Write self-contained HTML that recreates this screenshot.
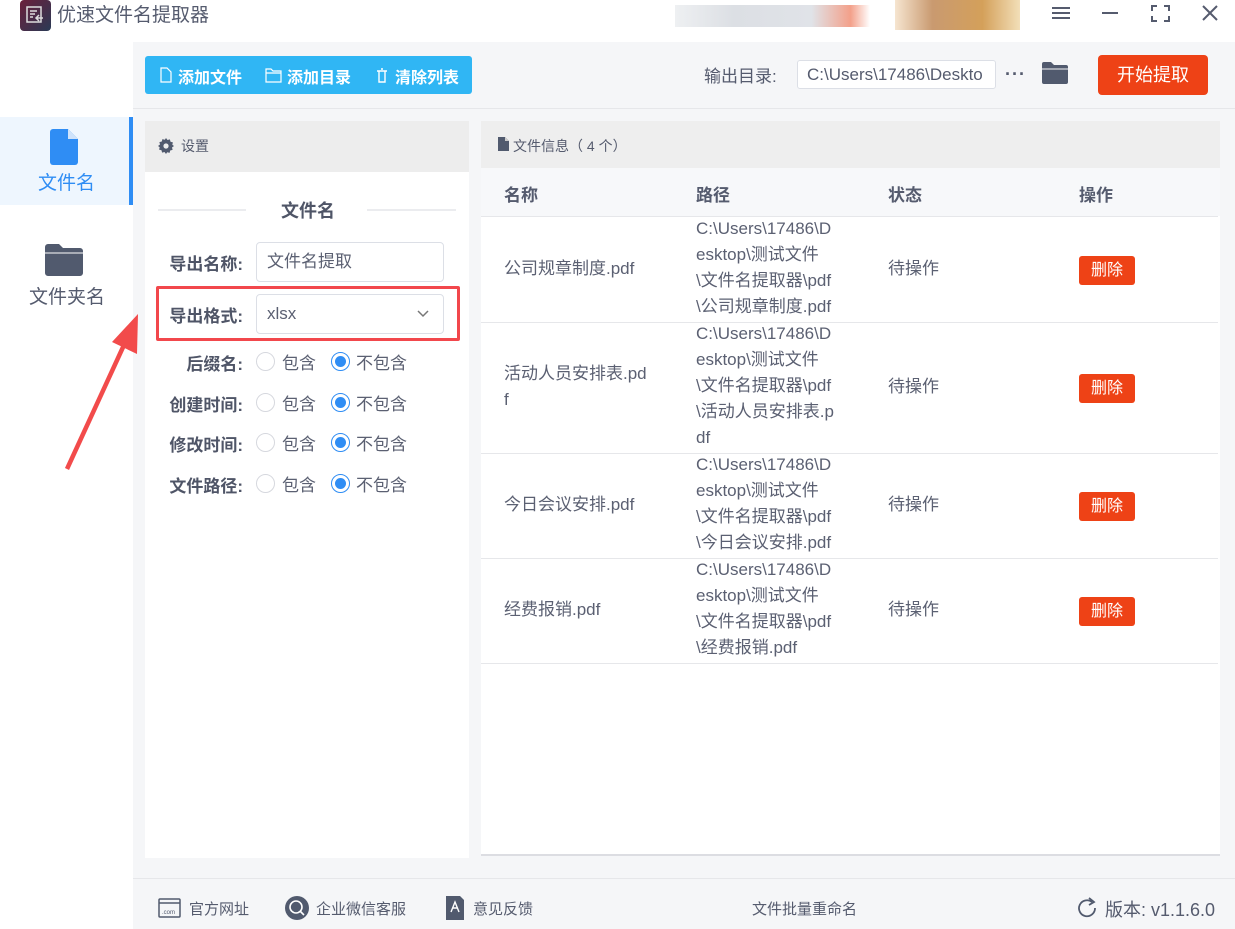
<!DOCTYPE html>
<html><head><meta charset="utf-8"><style>
*{margin:0;padding:0;box-sizing:border-box}
body{width:1235px;height:929px;position:relative;background:#fff;font-family:"Liberation Sans","Noto Sans CJK SC",sans-serif;color:#555b6e;overflow:hidden}
.a{position:absolute}
.lbl{font-size:17px;font-weight:bold;color:#4f5567;text-align:right;width:90px;left:153px}
.radio{width:19px;height:19px;border:1px solid #d6d8de;border-radius:50%;background:#fff}
.radio.on{border-color:#2f8df4}
.radio.on::after{content:"";position:absolute;left:3px;top:3px;width:11px;height:11px;border-radius:50%;background:#2f8df4}
.rt{font-size:17px;color:#5b6072}
.cell{font-size:17px;color:#5b6072;line-height:26px;white-space:nowrap}
.del{background:#ee4216;color:#fff;font-size:16px;width:56px;height:29px;line-height:29px;text-align:center;border-radius:3px}
.hline{height:1px;background:#e6e7ea}
</style></head><body>
<div class="a" style="left:20px;top:0;width:31px;height:31px;border-radius:4px;background:linear-gradient(135deg,#6b1f3a,#2a3a55)"></div>
<svg class="a" style="left:24px;top:4px" width="22" height="22" viewBox="0 0 22 22"><rect x="3" y="3" width="14" height="15" fill="none" stroke="#ddd" stroke-width="1.5"/><path d="M6 7h7M6 10h5M6 13h3M19 14h-7M15 11l-3 3 3 3" stroke="#ddd" stroke-width="1.5" fill="none"/></svg>
<div class="a" style="left:57px;top:0px;font-size:19px;color:#555b6e">优速文件名提取器</div>
<div class="a" style="left:675px;top:5px;width:195px;height:22px;background:linear-gradient(90deg,#eef0f2,#dcdfe4 30%,#e0e3e8 70%,#f3a08a 90%,#fff)"></div>
<div class="a" style="left:895px;top:0px;width:125px;height:30px;background:linear-gradient(90deg,#f6e5d0,#c99a70 30%,#d4a05a 70%,#f2dfb8)"></div>
<svg class="a" style="left:1050px;top:3px" width="175" height="20"><path d="M2 5h18M2 10h18M2 15h18" stroke="#555b6e" stroke-width="2"/><path d="M52 10h16" stroke="#555b6e" stroke-width="2"/><path d="M102 8V3h5M114 3h5v5M119 13v5h-5M107 18h-5v-5" stroke="#555b6e" stroke-width="2" fill="none"/><path d="M153 3l14 14M167 3l-14 14" stroke="#555b6e" stroke-width="2"/></svg>
<div class="a" style="left:0;top:117px;width:133px;height:88px;background:#eef6fe"></div>
<div class="a" style="left:129px;top:117px;width:4px;height:88px;background:#2f8df4"></div>
<svg class="a" style="left:50px;top:129px" width="28" height="36" viewBox="0 0 28 36"><path d="M3 0h15l10 10v23a3 3 0 0 1-3 3H3a3 3 0 0 1-3-3V3a3 3 0 0 1 3-3z" fill="#2f8df4"/><path d="M18 0v10h10z" fill="#cfe3fb"/></svg>
<div class="a" style="left:38px;top:168px;font-size:19px;color:#2f8df4">文件名</div>
<svg class="a" style="left:45px;top:244px" width="38" height="32"><path d="M0 3a3 3 0 0 1 3-3h11l4 4h17a3 3 0 0 1 3 3v22a3 3 0 0 1-3 3H3a3 3 0 0 1-3-3z" fill="#515a6e"/><path d="M0 9h38" stroke="#fff" stroke-width="1"/></svg>
<div class="a" style="left:29px;top:282px;font-size:19px;color:#555b6e">文件夹名</div>
<div class="a" style="left:133px;top:42px;width:1102px;height:887px;background:#f5f6f8"></div>
<div class="a hline" style="left:133px;top:108px;width:1102px"></div>
<div class="a" style="left:145px;top:56px;width:327px;height:38px;background:#30b6f4;border-radius:3px"></div>
<svg class="a" style="left:160px;top:67px" width="300" height="16"><path d="M1 1h6l4 4v10H1z" fill="none" stroke="#fff" stroke-width="1.2"/><path d="M106 2h5l2 2h8v11h-15z M106 6h15" fill="none" stroke="#fff" stroke-width="1.2"/><path d="M217 4h10M219 4v11h6V4M221 2h2" fill="none" stroke="#fff" stroke-width="1.4"/></svg>
<div class="a" style="left:178px;top:64px;font-size:16px;font-weight:bold;color:#fff">添加文件</div>
<div class="a" style="left:287px;top:64px;font-size:16px;font-weight:bold;color:#fff">添加目录</div>
<div class="a" style="left:395px;top:64px;font-size:16px;font-weight:bold;color:#fff">清除列表</div>
<div class="a" style="left:704px;top:62px;font-size:17px;color:#555b6e">输出目录:</div>
<div class="a" style="left:797px;top:60px;width:199px;height:29px;background:#fff;border:1px solid #dcdfe6;border-radius:3px;font-size:17px;line-height:27px;padding-left:9px;color:#555b6e;overflow:hidden;white-space:nowrap">C:\Users\17486\Deskto</div>
<div class="a" style="left:1005px;top:64px;font-size:18px;font-weight:bold;color:#555b6e;letter-spacing:1px">···</div>
<svg class="a" style="left:1042px;top:62px" width="26" height="22"><path d="M0 2a2 2 0 0 1 2-2h7l3 3h12a2 2 0 0 1 2 2v15a2 2 0 0 1-2 2H2a2 2 0 0 1-2-2z" fill="#515a6e"/><path d="M0 7h26" stroke="#f5f6f8" stroke-width="1"/></svg>
<div class="a" style="left:1098px;top:55px;width:110px;height:40px;background:#ee4216;border-radius:4px;color:#fff;font-size:18px;line-height:40px;text-align:center">开始提取</div>
<div class="a" style="left:145px;top:121px;width:324px;height:737px;background:#fff"></div>
<div class="a" style="left:145px;top:121px;width:324px;height:51px;background:#ededed"></div>
<svg class="a" style="left:158px;top:138px" width="16" height="16" viewBox="0 0 16 16"><path d="M8 0l1.5 2 2.4-.6.6 2.4 2.4.6-.6 2.4L16 8l-2 1.5.6 2.4-2.4.6-.6 2.4-2.4-.6L8 16l-1.5-2-2.4.6-.6-2.4-2.4-.6.6-2.4L0 8l2-1.5-.6-2.4 2.4-.6.6-2.4 2.4.6z" fill="#515a6e"/><circle cx="8" cy="8" r="2.6" fill="#ededed"/></svg>
<div class="a" style="left:181px;top:136px;font-size:14px;color:#555b6e">设置</div>
<div class="a" style="left:158px;top:209px;width:88px;height:2px;background:#ebecef"></div>
<div class="a" style="left:367px;top:209px;width:89px;height:2px;background:#ebecef"></div>
<div class="a" style="left:281px;top:197px;font-size:18px;font-weight:bold;color:#4f5567">文件名</div>
<div class="a lbl" style="top:250px">导出名称:</div>
<div class="a" style="left:256px;top:242px;width:188px;height:40px;border:1px solid #dcdfe6;border-radius:4px;font-size:17px;line-height:38px;padding-left:10px;color:#5b6072">文件名提取</div>
<div class="a" style="left:156px;top:286px;width:304px;height:55px;border:3px solid #f2474c;border-radius:2px"></div>
<div class="a lbl" style="top:302px">导出格式:</div>
<div class="a" style="left:256px;top:294px;width:188px;height:40px;border:1px solid #dcdfe6;border-radius:4px;font-size:17px;line-height:38px;padding-left:10px;color:#5b6072">xlsx</div>
<svg class="a" style="left:417px;top:310px" width="12" height="8"><path d="M1 1l5 5 5-5" stroke="#777" stroke-width="1.5" fill="none"/></svg>
<div class="a lbl" style="top:350px">后缀名:</div>
<div class="a lbl" style="top:391px">创建时间:</div>
<div class="a lbl" style="top:431px">修改时间:</div>
<div class="a lbl" style="top:472px">文件路径:</div>
<div class="a radio" style="left:256px;top:352px"></div><div class="a rt" style="left:282px;top:349px">包含</div><div class="a radio on" style="left:331px;top:352px"></div><div class="a rt" style="left:356px;top:349px">不包含</div>
<div class="a radio" style="left:256px;top:393px"></div><div class="a rt" style="left:282px;top:390px">包含</div><div class="a radio on" style="left:331px;top:393px"></div><div class="a rt" style="left:356px;top:390px">不包含</div>
<div class="a radio" style="left:256px;top:433px"></div><div class="a rt" style="left:282px;top:430px">包含</div><div class="a radio on" style="left:331px;top:433px"></div><div class="a rt" style="left:356px;top:430px">不包含</div>
<div class="a radio" style="left:256px;top:474px"></div><div class="a rt" style="left:282px;top:471px">包含</div><div class="a radio on" style="left:331px;top:474px"></div><div class="a rt" style="left:356px;top:471px">不包含</div>
<svg class="a" style="left:0;top:0" width="200" height="500"><path d="M67 469L124 345" stroke="#f24b4b" stroke-width="4.5"/><path d="M138 314L112 342L137 354z" fill="#f24b4b"/></svg>
<div class="a" style="left:481px;top:121px;width:739px;height:735px;background:#fff;border-bottom:2px solid #dcdde2"></div>
<div class="a" style="left:481px;top:121px;width:739px;height:47px;background:#eeeeee"></div>
<svg class="a" style="left:498px;top:137px" width="11" height="14"><path d="M0 0h7l4 4v10H0z" fill="#515a6e"/><path d="M7 0v4h4" fill="#ccc"/></svg>
<div class="a" style="left:513px;top:136px;font-size:14px;color:#555b6e">文件信息（ 4 个）</div>
<div class="a" style="left:481px;top:168px;width:739px;height:48px;background:#f7f8fa"></div>
<div class="a" style="left:504px;top:181px;font-size:17px;font-weight:bold;color:#555b6e">名称</div>
<div class="a" style="left:696px;top:181px;font-size:17px;font-weight:bold;color:#555b6e">路径</div>
<div class="a" style="left:888px;top:181px;font-size:17px;font-weight:bold;color:#555b6e">状态</div>
<div class="a" style="left:1079px;top:181px;font-size:17px;font-weight:bold;color:#555b6e">操作</div>
<div class="a hline" style="left:481px;top:216px;width:737px"></div>
<div class="a hline" style="left:481px;top:322px;width:737px"></div>
<div class="a hline" style="left:481px;top:453px;width:737px"></div>
<div class="a hline" style="left:481px;top:558px;width:737px"></div>
<div class="a hline" style="left:481px;top:663px;width:737px"></div>
<div class="a cell" style="left:504px;top:256px">公司规章制度.pdf</div>
<div class="a cell" style="left:696px;top:216px">C:\Users\17486\D<br>esktop\测试文件<br>\文件名提取器\pdf<br>\公司规章制度.pdf</div>
<div class="a cell" style="left:888px;top:256px">待操作</div>
<div class="a del" style="left:1079px;top:256px">删除</div>
<div class="a cell" style="left:504px;top:361px">活动人员安排表.pd<br>f</div>
<div class="a cell" style="left:696px;top:321px">C:\Users\17486\D<br>esktop\测试文件<br>\文件名提取器\pdf<br>\活动人员安排表.p<br>df</div>
<div class="a cell" style="left:888px;top:374px">待操作</div>
<div class="a del" style="left:1079px;top:374px">删除</div>
<div class="a cell" style="left:504px;top:492px">今日会议安排.pdf</div>
<div class="a cell" style="left:696px;top:452px">C:\Users\17486\D<br>esktop\测试文件<br>\文件名提取器\pdf<br>\今日会议安排.pdf</div>
<div class="a cell" style="left:888px;top:492px">待操作</div>
<div class="a del" style="left:1079px;top:492px">删除</div>
<div class="a cell" style="left:504px;top:597px">经费报销.pdf</div>
<div class="a cell" style="left:696px;top:557px">C:\Users\17486\D<br>esktop\测试文件<br>\文件名提取器\pdf<br>\经费报销.pdf</div>
<div class="a cell" style="left:888px;top:597px">待操作</div>
<div class="a del" style="left:1079px;top:597px">删除</div>
<div class="a hline" style="left:133px;top:878px;width:1102px"></div>
<svg class="a" style="left:158px;top:898px" width="24" height="20"><rect x="1" y="1" width="21" height="18" rx="1" fill="none" stroke="#515a6e" stroke-width="1.5"/><path d="M1 5h21" stroke="#515a6e" stroke-width="1.5"/><text x="4" y="16" font-size="6" fill="#515a6e" font-family="Liberation Sans">.com</text></svg>
<div class="a" style="left:189px;top:898px;font-size:15px;color:#555b6e">官方网址</div>
<svg class="a" style="left:284px;top:895px" width="26" height="26"><circle cx="13" cy="13" r="12" fill="#515a6e"/><circle cx="12" cy="12" r="6" fill="none" stroke="#fff" stroke-width="1.6"/><path d="M16 16l4 4" stroke="#fff" stroke-width="1.6"/></svg>
<div class="a" style="left:316px;top:898px;font-size:15px;color:#555b6e">企业微信客服</div>
<svg class="a" style="left:446px;top:896px" width="18" height="24"><path d="M0 0h14l4 4v20H0z" fill="#515a6e"/><path d="M5 16l4-10 4 10M7 12h4" stroke="#fff" stroke-width="1.4" fill="none"/></svg>
<div class="a" style="left:473px;top:898px;font-size:15px;color:#555b6e">意见反馈</div>
<div class="a" style="left:752px;top:898px;font-size:15px;color:#555b6e">文件批量重命名</div>
<svg class="a" style="left:1078px;top:897px" width="20" height="22"><path d="M14 5a8 8 0 1 0 3 6" stroke="#515a6e" stroke-width="1.8" fill="none"/><path d="M11 1l5 4-5 3" stroke="#515a6e" stroke-width="1.8" fill="none"/></svg>
<div class="a" style="left:1105px;top:896px;font-size:18px;color:#555b6e">版本: v1.1.6.0</div>
</body></html>
